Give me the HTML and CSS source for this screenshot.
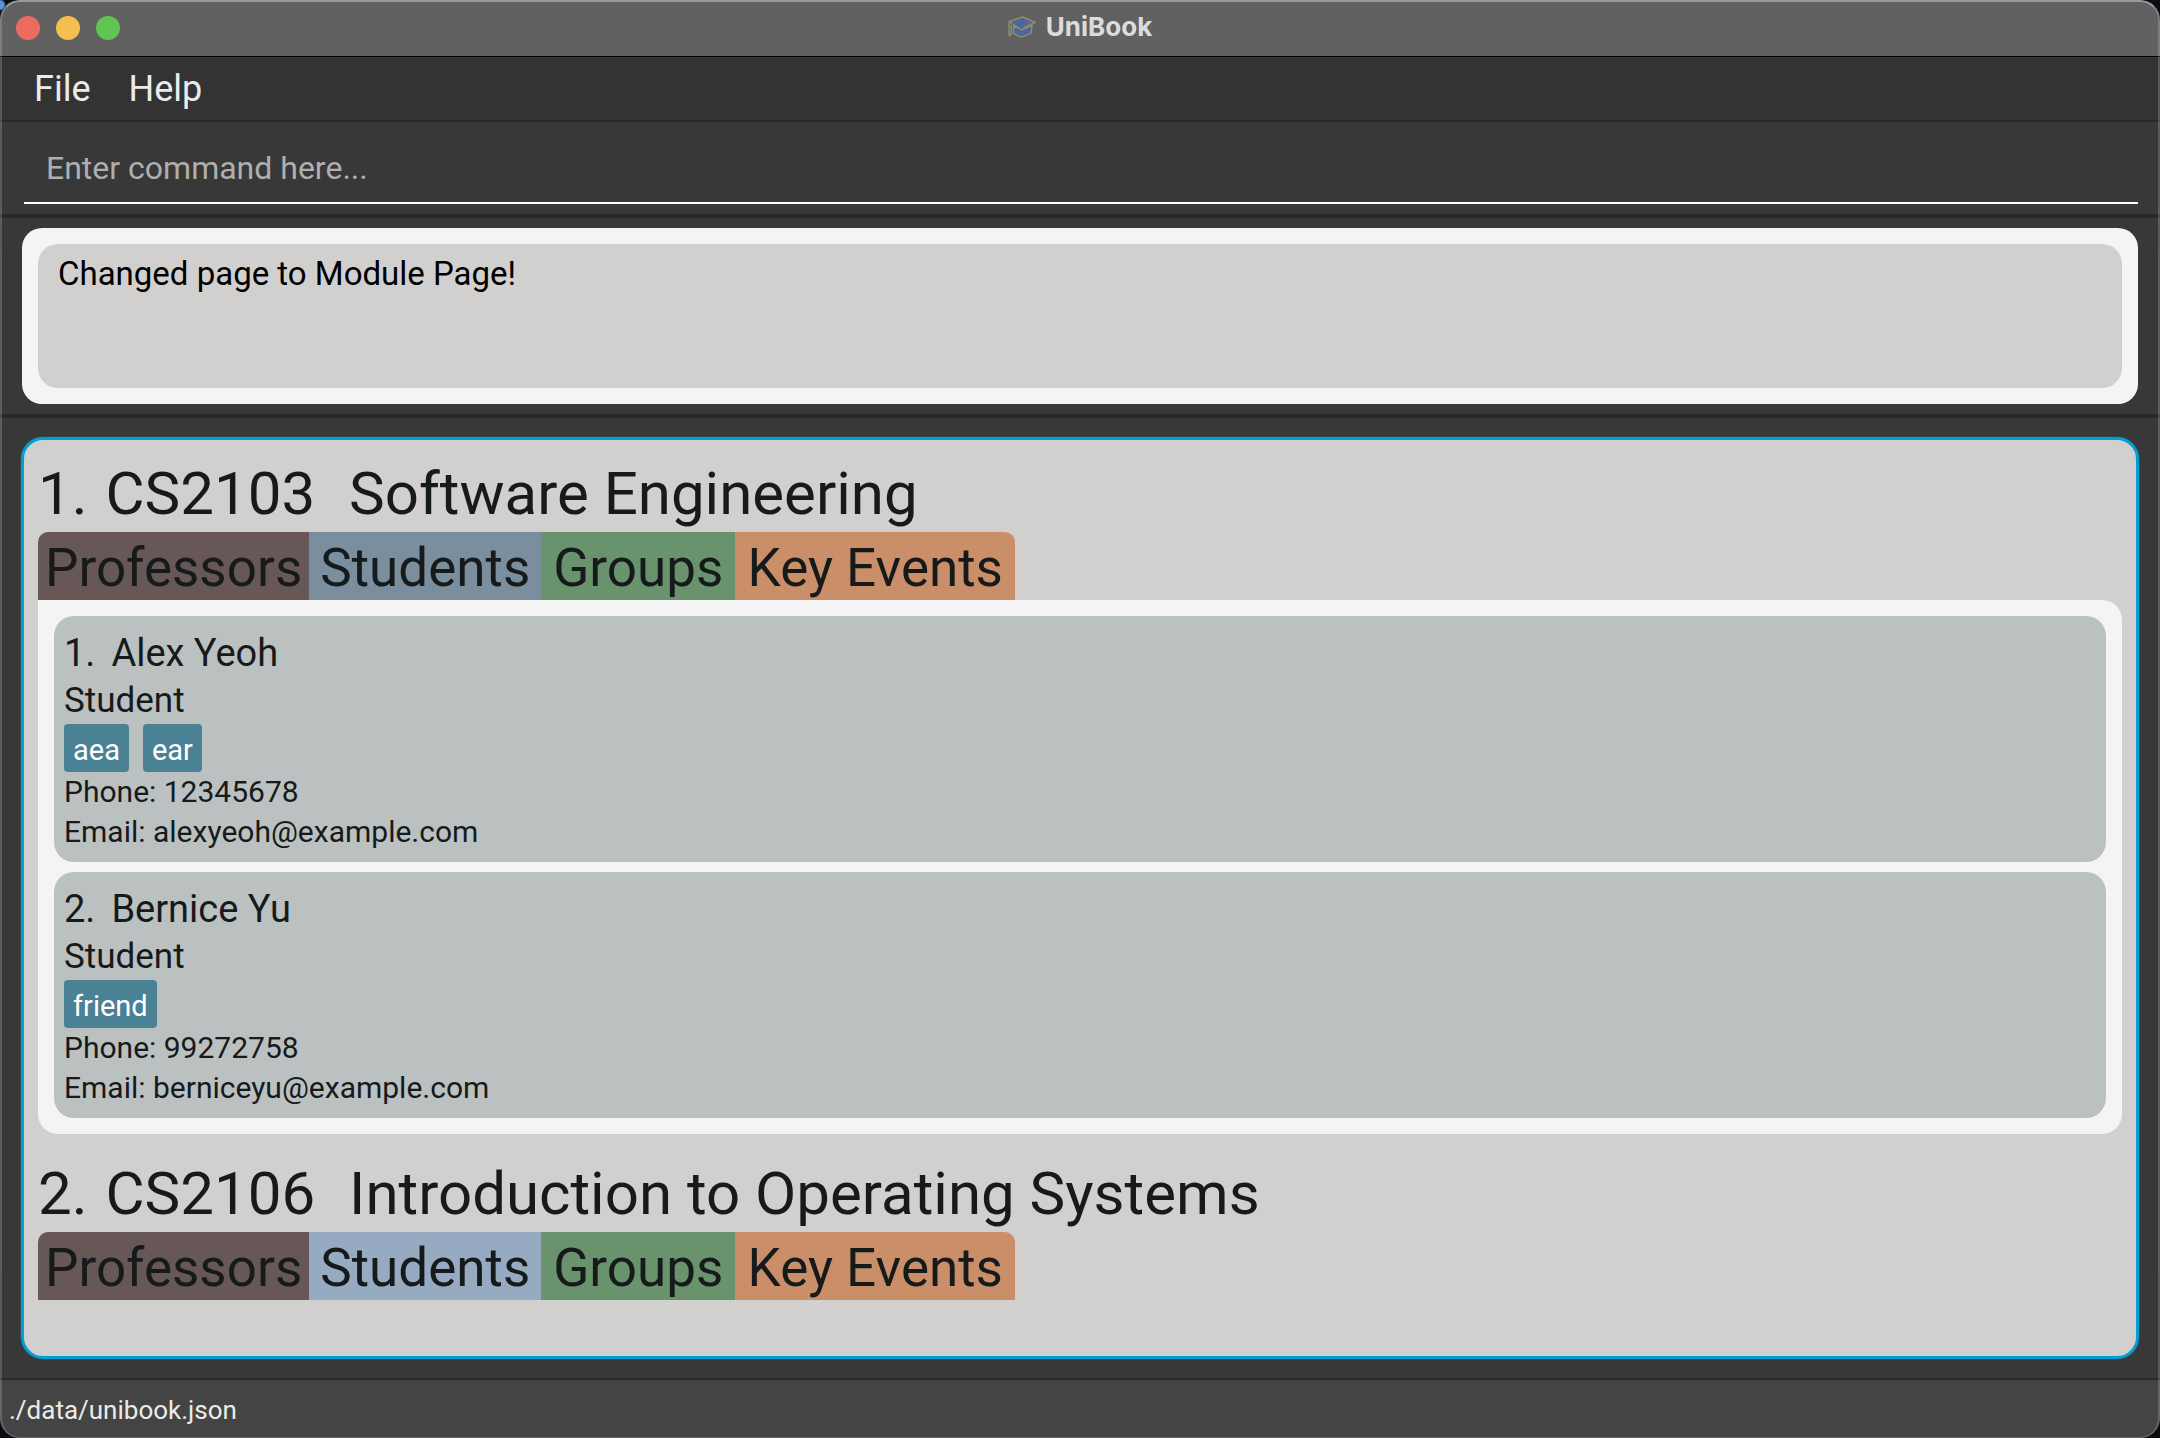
FILE: index.html
```html
<!DOCTYPE html>
<html lang="en">
<head>
<meta charset="utf-8">
<meta name="viewport" content="width=device-width, initial-scale=1">
<title>UniBook</title>
<link rel="stylesheet" href="styles.css">
</head>
<body>
<div class="window">
  <header class="titlebar">
    <div class="lights">
      <button class="light close" type="button" aria-label="Close"></button>
      <button class="light minimise" type="button" aria-label="Minimise"></button>
      <button class="light zoom" type="button" aria-label="Zoom"></button>
    </div>
    <h1 class="app-name">
      <svg class="cap" viewBox="0 0 28 22" width="28" height="22" aria-hidden="true">
        <path d="M5.500 10v7.500c2 .5 5 3.300 8 3.300 4 0 6-2.500 9.500-3.500L24 9.500l-10 4z" />
        <path d="M1 6.500v13l2.200-.8V9" />
        <path d="M14.500 1 1 5.500l3.500 2.500 9.500 6 3-2.800L27.300 6.500z" />
      </svg>
      UniBook
    </h1>
  </header>

  <nav class="menubar">
    <button class="menu" type="button">File</button>
    <button class="menu" type="button">Help</button>
  </nav>

  <form class="command">
    <input class="command-input" type="text" aria-label="Command" placeholder="Enter command here...">
  </form>

  <section class="result">
    <div class="result-frame">
      <textarea class="result-text" aria-label="Result" readonly>Changed page to Module Page!</textarea>
    </div>
  </section>

  <main class="content">
    <div class="modules">
      <section class="module">
        <h2 class="module-title"><span class="module-index">1.</span><span class="module-code">CS2103</span><span>Software Engineering</span></h2>
        <div class="tabs">
          <button class="tab professors" type="button">Professors</button>
          <button class="tab students selected" type="button">Students</button>
          <button class="tab groups" type="button">Groups</button>
          <button class="tab events" type="button">Key Events</button>
        </div>
        <div class="people">
          <article class="person">
            <h3 class="person-name"><span class="person-index">1.</span>Alex Yeoh</h3>
            <p class="role">Student</p>
            <div class="tags"><span class="tag">aea</span><span class="tag">ear</span></div>
            <p class="detail">Phone: 12345678</p>
            <p class="detail">Email: alexyeoh@example.com</p>
          </article>
          <article class="person">
            <h3 class="person-name"><span class="person-index">2.</span>Bernice Yu</h3>
            <p class="role">Student</p>
            <div class="tags"><span class="tag">friend</span></div>
            <p class="detail">Phone: 99272758</p>
            <p class="detail">Email: berniceyu@example.com</p>
          </article>
        </div>
      </section>
      <section class="module">
        <h2 class="module-title"><span class="module-index">2.</span><span class="module-code">CS2106</span><span>Introduction to Operating Systems</span></h2>
        <div class="tabs">
          <button class="tab professors" type="button">Professors</button>
          <button class="tab students" type="button">Students</button>
          <button class="tab groups" type="button">Groups</button>
          <button class="tab events" type="button">Key Events</button>
        </div>
      </section>
    </div>
  </main>

  <footer class="statusbar">./data/unibook.json</footer>
</div>
</body>
</html>
```
FILE: styles.css
```css
* {
  box-sizing: border-box;
}

body {
  margin: 0;
  background: radial-gradient(circle at 0 5px, #5b8fe0 4px, #0c0d14 6px);
  font-family: Roboto, "Liberation Sans", sans-serif;
  color: #161a1b;
}

h1, h2, h3, p {
  margin: 0;
  font-weight: 400;
}

button, input, textarea {
  font: inherit;
  color: inherit;
  border: 0;
  margin: 0;
  padding: 0;
  background: none;
}

.window {
  position: relative;
  display: flex;
  flex-direction: column;
  min-height: 100vh;
  border-radius: 20px;
  overflow: hidden;
  background: #383838;
}

/* light rim that runs over every bar of the window */
.window::after {
  content: "";
  position: absolute;
  inset: 0;
  border: solid rgba(255, 255, 255, 0.18);
  border-width: 2px 2px 1px;
  border-top-color: rgba(255, 255, 255, 0.36);
  border-radius: 20px;
  pointer-events: none;
}

.titlebar {
  display: grid;
  grid-template-columns: 1fr auto 1fr;
  align-items: center;
  height: 57px;
  padding: 0 16px;
  background: #616161;
  border-bottom: 1px solid #000000;
}

.lights {
  display: flex;
  gap: 16px;
}

.light {
  width: 24px;
  height: 24px;
  border-radius: 50%;
}

.close { background: #ed6a5e; }
.minimise { background: #f5bf4f; }
.zoom { background: #61c554; }

.app-name {
  display: flex;
  align-items: center;
  gap: 10px;
  padding-bottom: 2px;
  font: 700 26px/32px Inter, Roboto, sans-serif;
  color: #dcdcdc;
}

.cap {
  fill: #50659c;
  stroke: #8f8f62;
  stroke-width: 1.4;
  stroke-linejoin: round;
}

.menubar {
  display: flex;
  height: 65px;
  padding: 0 15px;
  background: #333333;
  border-bottom: 2px solid #2a2a2a;
}

.menu {
  padding: 0 19px;
  font-size: 36px;
  color: #ebebeb;
}

.command {
  padding: 14px 22px 10px 24px;
  border-bottom: 4px solid #2a2a2a;
}

.command-input {
  display: block;
  width: 100%;
  height: 68px;
  padding: 0 22px 2px;
  border-bottom: 2px solid #ffffff;
  font-size: 32px;
  outline: 0;
}

.command-input::placeholder {
  color: #afafaf;
  opacity: 1;
}

.result {
  padding: 10px 22px;
  border-bottom: 4px solid #2a2a2a;
}

.result-frame {
  padding: 16px;
  border-radius: 20px;
  background: #f4f4f4;
}

.result-text {
  display: block;
  width: 100%;
  height: 144px;
  padding: 10px 20px;
  border-radius: 20px;
  background: #d1d0ce;
  font-size: 33px;
  line-height: 40px;
  color: #000000;
  resize: none;
  outline: 0;
}

.content {
  flex: 1;
  display: flex;
  padding: 19px 21px;
}

.modules {
  flex: 1;
  padding: 0 14px;
  border: 3px solid #039ed3;
  border-radius: 22px;
  background: #d1d0ce;
  box-shadow: 0 0 0 1px #2b4a56;
}

.module {
  padding: 18px 0 6px;
}

.module-title {
  display: flex;
  padding-bottom: 2px;
  font-size: 60px;
  line-height: 72px;
}

.module-index {
  margin-right: 18px;
}

.module-code {
  margin-right: 34px;
}

.tabs {
  display: flex;
}

.tab {
  padding: 4px 7px 0;
  font-size: 53px;
  line-height: 64px;
}

.tab:first-child { border-top-left-radius: 10px; }
.tab:last-child { border-top-right-radius: 10px; }

.professors { background: #675857; }
.students { min-width: 232px; background: #96abc1; }
.students.selected { background: #7b8e9d; }
.groups { min-width: 194px; background: #69936c; }
.events { min-width: 280px; background: #ca8f69; }

.people {
  display: flex;
  flex-direction: column;
  gap: 10px;
  padding: 16px;
  border-radius: 0 20px 20px 20px;
  background: #f4f4f4;
}

.person {
  padding: 10px;
  border-radius: 20px;
  background: #bbc1c0;
}

.person-name {
  display: flex;
  font-size: 38px;
  line-height: 54px;
}

.person-index {
  margin-right: 16px;
}

.role {
  font-size: 35px;
  line-height: 42px;
}

.tags {
  display: flex;
  gap: 14px;
  margin-top: 2px;
}

.tag {
  padding: 4px 9px 0;
  border-radius: 4px;
  background: #4b8195;
  font-size: 29px;
  line-height: 44px;
  color: #ffffff;
}

.detail {
  font-size: 30px;
  line-height: 40px;
}

.statusbar {
  height: 60px;
  padding: 4px 9px 0;
  border-top: 2px solid #2a2a2a;
  background: #444444;
  font-size: 26px;
  line-height: 52px;
  color: #ebebeb;
}
```
